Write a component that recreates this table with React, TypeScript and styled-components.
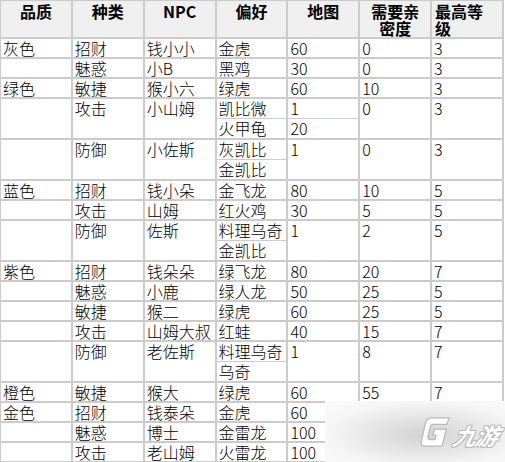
import styled, { createGlobalStyle } from 'styled-components';

const GlobalStyle = createGlobalStyle`
  html, body {
    margin: 0;
    padding: 0;
    background: #ffffff;
  }
  body {
    font-family: "Noto Sans CJK SC", "Liberation Sans", sans-serif;
    color: #000;
  }
`;

const Wrap = styled.div`
  position: relative;
  width: 505px;
  height: 462px;
  overflow: hidden;
`;

const Table = styled.table`
  width: 505px;
  table-layout: fixed;
  border-collapse: separate;
  border-spacing: 2px;
  background: #cbcbcb;
  font-size: 16px;
  font-weight: 300;
  margin: -1px 0 0 -1px;
`;

const Th = styled.th<{ $left?: boolean }>`
  background: #efefef;
  height: 36px;
  padding: 2px 3px 0;
  box-sizing: border-box;
  vertical-align: top;
  text-align: ${p => (p.$left ? 'left' : 'center')};
  font-weight: 700;
  line-height: 17px;
`;

const Td = styled.td`
  background: #fff;
  height: 18px;
  padding: 0 2px;
  vertical-align: top;
  line-height: 18px;
  white-space: nowrap;
`;

const SplitTd = styled.td`
  background: #fff;
  padding: 0;
  vertical-align: top;
  line-height: 18px;
  white-space: nowrap;
`;

const SubLine = styled.div`
  padding: 0 2px;
  height: 19px;
  & + & {
    border-top: 1px solid #c3cbdc;
  }
`;

const Watermark = styled.div`
  position: absolute;
  left: 325px;
  top: 401px;
  width: 180px;
  height: 61px;
  background: radial-gradient(ellipse at 55% 55%, #d2d2d2 0%, #e4e4e4 35%, #f6f6f6 70%, #fbfbfb 100%);
  display: flex;
  align-items: center;
  justify-content: flex-end;
  gap: 3px;
  padding-right: 7px;
  box-sizing: border-box;
`;

const Brand = styled.span`
  font-family: "Noto Sans CJK SC", sans-serif;
  font-size: 23px;
  font-weight: 700;
  font-style: italic;
  color: #fff;
  transform: skewX(-14deg);
  letter-spacing: -1px;
  text-shadow: -1px -1px 0 #b8b8b8, 1px -1px 0 #b8b8b8, -1px 1px 0 #b8b8b8, 1px 1px 0 #b8b8b8;
  margin-top: 6px;
`;

type Row = {
  q: string;
  kind: string;
  npc: string;
  pref: string[];
  map: string[];
  close: string;
  level: string;
};

const rows: Row[] = [
  { q: '灰色', kind: '招财', npc: '钱小小', pref: ['金虎'], map: ['60'], close: '0', level: '3' },
  { q: '', kind: '魅惑', npc: '小B', pref: ['黑鸡'], map: ['30'], close: '0', level: '3' },
  { q: '绿色', kind: '敏捷', npc: '猴小六', pref: ['绿虎'], map: ['60'], close: '10', level: '3' },
  { q: '', kind: '攻击', npc: '小山姆', pref: ['凯比微', '火甲龟'], map: ['1', '20'], close: '0', level: '3' },
  { q: '', kind: '防御', npc: '小佐斯', pref: ['灰凯比', '金凯比'], map: ['1'], close: '0', level: '3' },
  { q: '蓝色', kind: '招财', npc: '钱小朵', pref: ['金飞龙'], map: ['80'], close: '10', level: '5' },
  { q: '', kind: '攻击', npc: '山姆', pref: ['红火鸡'], map: ['30'], close: '5', level: '5' },
  { q: '', kind: '防御', npc: '佐斯', pref: ['料理乌奇', '金凯比'], map: ['1'], close: '2', level: '5' },
  { q: '紫色', kind: '招财', npc: '钱朵朵', pref: ['绿飞龙'], map: ['80'], close: '20', level: '7' },
  { q: '', kind: '魅惑', npc: '小鹿', pref: ['绿人龙'], map: ['50'], close: '25', level: '5' },
  { q: '', kind: '敏捷', npc: '猴二', pref: ['绿虎'], map: ['60'], close: '25', level: '5' },
  { q: '', kind: '攻击', npc: '山姆大叔', pref: ['红蛙'], map: ['40'], close: '15', level: '7' },
  { q: '', kind: '防御', npc: '老佐斯', pref: ['料理乌奇', '乌奇'], map: ['1'], close: '8', level: '7' },
  { q: '橙色', kind: '敏捷', npc: '猴大', pref: ['绿虎'], map: ['60'], close: '55', level: '7' },
  { q: '金色', kind: '招财', npc: '钱泰朵', pref: ['金虎'], map: ['60'], close: '', level: '' },
  { q: '', kind: '魅惑', npc: '博士', pref: ['金雷龙'], map: ['100'], close: '', level: '' },
  { q: '', kind: '攻击', npc: '老山姆', pref: ['火雷龙'], map: ['100'], close: '', level: '' },
];

function Cell({ lines, tall }: { lines: string[]; tall: boolean }) {
  if (!tall) return <Td>{lines[0]}</Td>;
  return (
    <SplitTd>
      {lines.map((l, i) => (
        <SubLine key={i}>{l}</SubLine>
      ))}
    </SplitTd>
  );
}

function Logo() {
  return (
    <svg width="32" height="36" viewBox="0 0 34 36">
      <path
        d="M13 3 H32 L29.5 10 H15.5 Q12.5 10 12 12.5 L9.5 23 Q9 26 12 26 H17 L18.2 21.5 H14.5 L16.5 15 H29 L24.5 33 H6 Q1.5 33 2.5 28.5 L6.5 9.5 Q8 3 13 3 Z"
        fill="#fff"
        stroke="#b9b9b9"
        strokeWidth="1.3"
        strokeLinejoin="round"
      />
    </svg>
  );
}

export default function App() {
  return (
    <>
      <GlobalStyle />
      <Wrap>
        <Table>
          <thead>
            <tr>
              <Th>品质</Th>
              <Th>种类</Th>
              <Th>NPC</Th>
              <Th>偏好</Th>
              <Th>地图</Th>
              <Th>需要亲密度</Th>
              <Th $left>最高等级</Th>
            </tr>
          </thead>
          <tbody>
            {rows.map((r, i) => {
              const tall = r.pref.length > 1;
              return (
                <tr key={i}>
                  <Td>{r.q}</Td>
                  <Td>{r.kind}</Td>
                  <Td>{r.npc}</Td>
                  <Cell lines={r.pref} tall={tall} />
                  <Cell lines={r.map} tall={tall} />
                  <Td>{r.close}</Td>
                  <Td>{r.level}</Td>
                </tr>
              );
            })}
          </tbody>
        </Table>
        <Watermark>
          <Logo />
          <Brand>九游</Brand>
        </Watermark>
      </Wrap>
    </>
  );
}
